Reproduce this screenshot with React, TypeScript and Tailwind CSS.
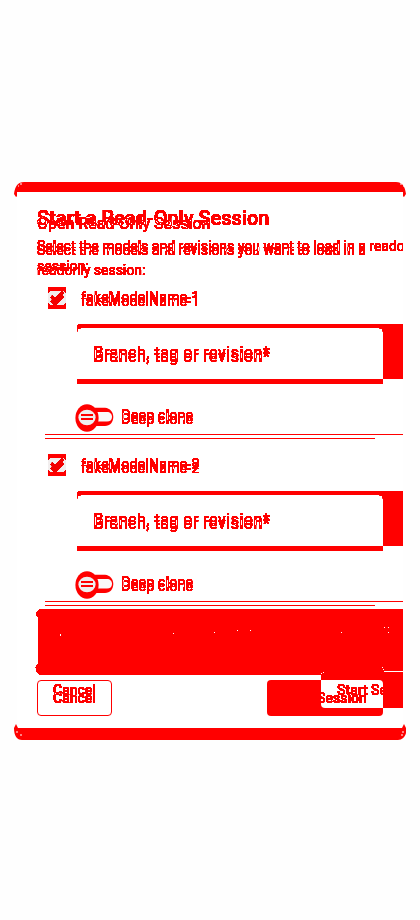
import React from "react";

type LayerProps = { updated?: boolean };

function CheckBox() {
  return (
    <span className="flex size-[18px] items-center justify-center rounded-[2px] bg-[#0ff]">
      <svg viewBox="0 0 24 24" className="size-[18px]" fill="none" stroke="#000" strokeWidth="3">
        <path d="M4.5 12.5 9.5 17.5 20 6.5" />
      </svg>
    </span>
  );
}

function ModelRow({ name, updated }: { name: string; updated?: boolean }) {
  return (
    <div
      className={
        "ml-2 flex h-[167px] shrink-0 flex-col border-b border-[#0ff] pt-[19px] " + (updated ? "w-[330px]" : "w-[400px]")
      }
    >
      <div className="flex h-[18px] items-center gap-[15px] pl-[3px]">
        <CheckBox />
        <span className="pt-0.5 text-[14px] leading-5 tracking-[0.25px]">{name}</span>
      </div>
      <div
        className={
          "ml-8 mt-[19px] rounded-t bg-[#0ff] pl-[16.5px] pt-[17px] text-[16px] leading-6 tracking-[0.5px] text-black " +
          (updated ? "h-14 w-[306px]" : "h-[55px] w-[360px]")
        }
      >
        Branch, tag or revision*
      </div>
      <div className={"pl-[76.5px] text-[14px] leading-5 tracking-[0.25px] " + (updated ? "pt-[25px]" : "pt-[26px]")}>
        Deep clone
      </div>
    </div>
  );
}

function Layer({ updated }: LayerProps) {
  return (
    <div
      className={
        "flex min-w-0 flex-col pl-5 text-[#0ff] mix-blend-difference [grid-area:1/1] " + (updated ? "pt-1" : "")
      }
    >
      <div className="h-[76px] shrink-0 whitespace-nowrap">
        {updated ? (
          <h2 className="pt-4 text-[16px] leading-6">Open Read-Only Session</h2>
        ) : (
          <h1 className="pt-[14px] text-[20px] font-medium leading-6">Start a Read-Only Session</h1>
        )}
        <p className={"text-[14px] leading-5 " + (updated ? "pt-1" : "pt-1.5")}>
          Select the models and revisions you want to load in a {updated && <br />}readonly {!updated && <br />}
          session:
        </p>
      </div>
      <ModelRow name="fakeModelName-1" updated={updated} />
      <ModelRow name="fakeModelName-2" updated={updated} />
    </div>
  );
}

function Toggle() {
  return (
    <svg width="40" height="30" viewBox="75 403 40 30">
      <path d="M92 407.7H105C110 408 113.3 412 113.3 417S110 426 105 426H92Z" fill="#f00" />
      <path d="M96 412H107C110 412 112 414 112 417S110 421.5 107 421.5H96Z" fill="#fafafa" />
      <ellipse cx="87" cy="418" rx="11.6" ry="13.8" fill="#f00" />
      <ellipse cx="87" cy="417.5" rx="8.6" ry="7.8" fill="#eee" />
      <path d="M81 415H93M81 419H93" stroke="#f00" strokeWidth="2" shapeRendering="crispEdges" />
    </svg>
  );
}

function RowShading() {
  return (
    <div className="flex h-[167px] shrink-0 flex-col items-start">
      <div className="ml-[31px] mt-[23px] h-[14px] w-[18px] bg-[#f2eeee]" />
      <div className="ml-[58px] mt-[98px]">
        <Toggle />
      </div>
    </div>
  );
}

const specks = [
  [60, 634], [60, 635], [173, 633], [214, 632], [237, 630], [250, 630], [341, 632],
  [384, 627], [388, 627], [388, 632], [382, 667], [383, 669], [321, 673], [323, 672],
];

export default function App() {
  return (
    <main className="h-[920px] w-[420px] overflow-hidden bg-[#fefefe] pl-[14px] pt-[182px] font-[Roboto,sans-serif] text-[#f00]">
      <svg className="absolute size-0">
        <filter id="contrast" colorInterpolationFilters="sRGB" x="0" y="0" width="1" height="1">
          <feComponentTransfer>
            <feFuncG type="linear" slope="20" intercept="-18.6" />
            <feFuncB type="linear" slope="20" intercept="-18.6" />
          </feComponentTransfer>
        </filter>
      </svg>

      <svg width="392" height="16" viewBox="0 0 392 16" className="block">
        <path d="M0 12C1 4 4 0 10 0H382C388 0 391 4 392 12L390 15 384 10H8L2 15Z" fill="#f00" />
        <path d="M4 4h1M6 2h2M386 2h2M389 4h1" stroke="#fff" />
      </svg>

      <section className="-mt-1.5 ml-[3px] flex h-[536px] w-[386px] flex-col overflow-hidden bg-white">
        <div className="grid h-[417px] shrink-0 grid-cols-1 overflow-hidden">
          <div className="isolate grid h-[417px] grid-cols-1 overflow-hidden bg-white [filter:url(#contrast)] [grid-area:1/1]">
            <Layer />
            <Layer updated />
          </div>
          <div className="z-10 flex flex-col pt-[76px] mix-blend-multiply [grid-area:1/1]">
            <RowShading />
            <RowShading />
          </div>
        </div>

        <svg width="368" height="66" viewBox="35 609 368 66" className="ml-[18px] block shrink-0" shapeRendering="crispEdges">
          <path d="M40 609H403V675H40L37 673 36 671V669L35 668 37 664 38 663V618L37 617 36 614 35 613 37 611Z" fill="#f00" />
          {specks.map(([x, y]) => (
            <rect key={`${x}-${y}`} x={x} y={y} width="1" height="1" fill="#fff" />
          ))}
          <rect x="384" y="671" width="19" height="1" fill="#fff" />
        </svg>

        <div className="flex h-[53px] items-start pl-5 text-[14px] font-medium leading-5">
          <div className="mt-[5px] h-9 w-[75px] rounded border border-[#f00] px-[15px]">
            <div className="isolate grid h-[30px] bg-white [filter:url(#contrast)]">
              <span className="-mt-px text-[#0ff] mix-blend-difference [grid-area:1/1]">Cancel</span>
              <span className="mt-[7px] text-[#0ff] mix-blend-difference [grid-area:1/1]">Cancel</span>
            </div>
          </div>
          <div className="ml-[155px] mt-[5px] h-9 w-[54px] rounded-l bg-[#f00]" />
          <div className="flex w-[62px] flex-col">
            <div className="h-[5px] bg-[#f00]" />
            <div className="rounded-br bg-[#f00]">
              <div className="isolate grid h-7 w-[62px] grid-cols-1 overflow-hidden whitespace-nowrap rounded-bl rounded-tr bg-white [filter:url(#contrast)]">
                <span className="ml-4 w-0 text-[#0ff] mix-blend-difference [grid-area:1/1]">Start Session</span>
                <span className="-ml-[38px] w-0 pt-2 text-[#0ff] mix-blend-difference [grid-area:1/1]">Start Session</span>
              </div>
              <div className="h-2" />
            </div>
          </div>
          <div className="h-[33px] w-5 bg-[#f00]" />
        </div>
      </section>

      <svg width="392" height="16" viewBox="0 0 392 16" className="-mt-1 block">
        <path d="M2 0L4 4H388L390 0 392 4V9C391 13 388 16 384 16H8C3 16 0 12 0 4Z" fill="#f00" />
        <path d="M3 7v2M6 11h2M387 11h2M389 7v2" stroke="#fff" />
      </svg>
    </main>
  );
}
